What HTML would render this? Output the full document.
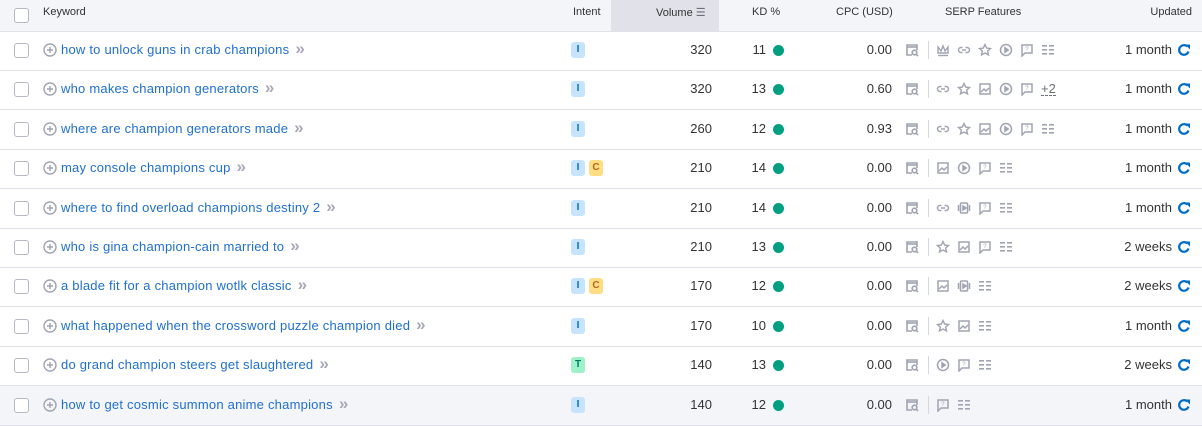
<!DOCTYPE html><html><head><meta charset="utf-8"><style>
body{margin:0;width:1202px;height:425px;overflow:hidden;background:#fff;font-family:"Liberation Sans",Arial,sans-serif;color:#333;position:relative}
.hdr{position:absolute;left:0;top:0;width:1202px;height:31px;background:#f4f5f9;border-bottom:1px solid #e0e1e9;font-size:11px;color:#333}
.hdr span{position:absolute;top:6px}
.row{position:absolute;left:0;width:1202px;height:39px;border-bottom:1px solid #e0e1e9;font-size:13px}
.row>*{position:absolute}
.cb{left:14px;top:12px;width:13px;height:13px;border:1px solid #b6b8c4;border-radius:3px;background:#fff}
.pl{left:43px;top:12px}
.kw{left:61px;top:11px;color:#1f6fd0;letter-spacing:.22px}
.kw i{font-style:normal;color:#a7a9b6;margin-left:6px;font-size:17px;line-height:13px;font-weight:bold}
.bd{top:11px;width:14px;height:16px;border-radius:3px;font-size:10px;font-weight:bold;text-align:center;line-height:16px}
.bI{background:#c7e4ff;color:#006dca}.bC{background:#ffdd85;color:#b5671a}.bT{background:#9ef2c9;color:#007c65}
.num{top:11px;text-align:right}
.dot{left:773px;top:14px;width:11px;height:11px;border-radius:50%;background:#009f81}
.ic{top:12px;left:905px;height:14px;display:flex;align-items:center}
.ic svg{width:14px;height:14px;margin-right:7px}
.sep{width:1px;height:18px;background:#d6d8e0;margin:0 7px 0 2px}
.up{right:30px;top:11px}
.rf{left:1177px;top:12px}
</style></head><body>
<svg width="0" height="0" style="position:absolute"><defs>
<g id="s" fill="none" stroke="#a0a3b1" stroke-width="1.6"><path d="M12 7V2H2v10h5"/><circle cx="9.5" cy="9.5" r="2.3"/><path d="M11 11l2 2"/><path d="M2 4h10"/></g>
<g id="cr" fill="none" stroke="#a0a3b1" stroke-width="1.4"><path d="M2 4l3 4 2-5 2 5 3-4v6H2z"/><path d="M2 12.5h10"/></g>
<g id="ln" fill="none" stroke="#a0a3b1" stroke-width="1.5"><path d="M5.5 4.5H4a2.5 2.5 0 000 5h1.5M8.5 4.5H10a2.5 2.5 0 010 5H8.5M5 7h4"/></g>
<g id="st" fill="none" stroke="#a0a3b1" stroke-width="1.4"><path d="M7 1.5l1.7 3.6 3.8.4-2.9 2.6.9 3.8L7 10l-3.5 1.9.9-3.8L1.5 5.5l3.8-.4z"/></g>
<g id="vd" fill="none" stroke="#a0a3b1" stroke-width="1.5"><circle cx="7" cy="7" r="5.5"/><path d="M6 4.8v4.4L9.2 7z" fill="#a0a3b1"/></g>
<g id="fq" fill="none" stroke="#a0a3b1" stroke-width="1.5"><path d="M2 2h10v8H5l-3 3z"/><text x="5.2" y="8" font-size="6" fill="#a0a3b1" stroke="none" font-family="Liberation Sans">?</text></g>
<g id="ls" fill="#a0a3b1"><rect x="1" y="2" width="5" height="1.6"/><rect x="8" y="2" width="5" height="1.6"/><rect x="1" y="6" width="5" height="1.6"/><rect x="8" y="6" width="5" height="1.6"/><rect x="1" y="10" width="5" height="1.6"/><rect x="8" y="10" width="5" height="1.6"/></g>
<g id="im" fill="none" stroke="#a0a3b1" stroke-width="1.5"><rect x="2" y="2" width="10" height="10"/><path d="M3 10l3-3 2 2 3-3"/></g>
<g id="fm" fill="none" stroke="#a0a3b1" stroke-width="1.5"><rect x="3.5" y="2" width="7" height="10" rx="1"/><path d="M1.5 4v6M12.5 4v6"/><path d="M6 5v4l3-2z" fill="#a0a3b1"/></g>
</defs></svg>
<div class="hdr">
<div style="position:absolute;left:14px;top:8px;width:13px;height:13px;border:1px solid #b6b8c4;border-radius:3px;background:#fff"></div>
<span style="left:43px">Keyword</span>
<span style="left:573px">Intent</span>
<div style="position:absolute;left:611px;top:0;width:108px;height:31px;background:#e0e1e9"></div>
<span style="left:656px">Volume <b style="font-weight:normal;color:#6c6e79">☰</b></span>
<span style="left:752px">KD %</span>
<span style="left:836px">CPC (USD)</span>
<span style="left:945px">SERP Features</span>
<span style="right:10px">Updated</span>
</div>
<div id="rows"></div>
<script>
var D=[
["how to unlock guns in crab champions","I",320,11,"0.00","cr ln st vd fq ls","1 month"],
["who makes champion generators","I",320,13,"0.60","ln st im vd fq +2","1 month"],
["where are champion generators made","I",260,12,"0.93","ln st im vd fq ls","1 month"],
["may console champions cup","IC",210,14,"0.00","im vd fq ls","1 month"],
["where to find overload champions destiny 2","I",210,14,"0.00","ln fm fq ls","1 month"],
["who is gina champion-cain married to","I",210,13,"0.00","st im fq ls","2 weeks"],
["a blade fit for a champion wotlk classic","IC",170,12,"0.00","im fm ls","2 weeks"],
["what happened when the crossword puzzle champion died","I",170,10,"0.00","st im ls","1 month"],
["do grand champion steers get slaughtered","T",140,13,"0.00","vd fq ls","2 weeks"],
["how to get cosmic summon anime champions","I",140,12,"0.00","fq ls","1 month"]];
var h="";
D.forEach(function(r,i){
var top=31+i*39.4;var bg=i==9?"background:#f4f5f9;":"";
var b="";for(var k=0;k<r[1].length;k++)b+='<div class="bd b'+r[1][k]+'" style="left:'+(571+k*18)+'px">'+r[1][k]+'</div>';
var ic='<svg viewBox="0 0 14 14"><use href="#s"/></svg><div class="sep"></div>';
r[5].split(" ").forEach(function(x){ic+=x=="+2"?'<span style="font-size:13px;color:#6c6e79;border-bottom:1px dashed #6c6e79;line-height:13px">+2</span>':'<svg viewBox="0 0 14 14"><use href="#'+x+'"/></svg>';});
h+='<div class="row" style="top:'+top+'px;'+bg+'"><div class="cb"></div>'+
'<svg class="pl" width="14" height="14" viewBox="0 0 14 14"><circle cx="7" cy="7" r="6" fill="none" stroke="#a0a3b1" stroke-width="1.4"/><path d="M7 4v6M4 7h6" stroke="#a0a3b1" stroke-width="1.4"/></svg>'+
'<span class="kw">'+r[0]+'<i>»</i></span>'+b+
'<span class="num" style="right:490px">'+r[2]+'</span><span class="num" style="right:436px">'+r[3]+'</span><div class="dot"></div>'+
'<span class="num" style="right:310px">'+r[4]+'</span><div class="ic">'+ic+'</div>'+
'<span class="up">'+r[6]+'</span>'+
'<svg class="rf" width="14" height="14" viewBox="0 0 14 14"><path d="M11.5 8.5A4.8 4.8 0 1 1 10.3 3.5" fill="none" stroke="#006dca" stroke-width="2.2"/><path d="M8 1.5h5v5z" fill="#006dca"/></svg></div>';
});
document.getElementById("rows").innerHTML=h;
</script>
</body></html>
